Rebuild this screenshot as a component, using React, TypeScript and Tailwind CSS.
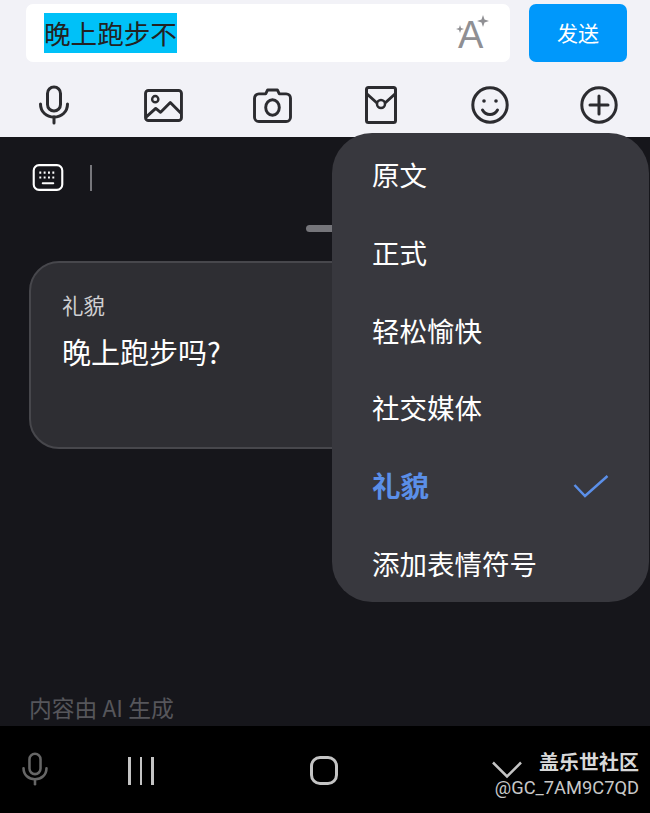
const cjk = "font-['Noto_Sans_CJK_SC','Noto_Sans',sans-serif]";

const menuItems = ["原文", "正式", "轻松愉快", "社交媒体", "礼貌", "添加表情符号"];

const Mic = ({ className }: { className?: string }) => (
  <svg viewBox="0 0 32 40" fill="none" stroke="currentColor" strokeWidth="3" strokeLinecap="round" className={className}>
    <rect x="9.5" y="2" width="13" height="24" rx="6.5" />
    <path d="M2.5 19c0 8 6 13 13.5 13s13.500-5 13.500-13" />
    <path d="M16 32v6" />
  </svg>
);

const ToolIcons = () => (
  <div className="ml-[-0.5px] grid h-[44px] grid-cols-[repeat(6,109px)] items-center justify-items-center text-[#2c2c30]">
    <Mic className="h-[40px] w-[32px]" />
    <svg viewBox="0 0 40 34" fill="none" stroke="currentColor" strokeWidth="3" strokeLinejoin="round" className="h-[33px] w-[39px]">
      <rect x="1.500" y="1.500" width="37" height="31" rx="3" />
      <circle cx="11.500" cy="10.500" r="3.200" strokeWidth="2.500" />
      <path d="M2 29l10-9 5 4 10-10 11 11" />
    </svg>
    <svg viewBox="0 0 40 36" fill="none" stroke="currentColor" strokeWidth="3" strokeLinejoin="round" className="h-[35px] w-[39px]">
      <path d="M13 6l2-4h10l2 4h7a4.500 4.500 0 0 1 4.500 4.500V30a4.500 4.500 0 0 1-4.500 4.500H6A4.500 4.500 0 0 1 1.500 30V10.500A4.500 4.500 0 0 1 6 6z" />
      <ellipse cx="20" cy="20" rx="7" ry="8" />
    </svg>
    <svg viewBox="0 0 32 38" fill="none" stroke="currentColor" strokeWidth="3" strokeLinejoin="round" className="h-[38px] w-[32px]">
      <rect x="1.500" y="1.500" width="29" height="35" rx="2" />
      <path d="M2 8l10 9M30 8l-10 9" />
      <circle cx="16" cy="18" r="4" strokeWidth="2.500" />
    </svg>
    <svg viewBox="0 0 38 38" fill="none" stroke="currentColor" strokeWidth="3" strokeLinecap="round" className="h-[38px] w-[38px]">
      <circle cx="19" cy="19" r="17.200" />
      <circle cx="13" cy="15" r="1.800" fill="currentColor" stroke="none" />
      <circle cx="25" cy="15" r="1.800" fill="currentColor" stroke="none" />
      <path d="M11.500 24c2 3.500 4.500 4.500 7.500 4.500s5.500-1 7.500-4.500" />
    </svg>
    <svg viewBox="0 0 38 38" fill="none" stroke="currentColor" strokeWidth="3" strokeLinecap="round" className="h-[38px] w-[38px]">
      <circle cx="19" cy="19" r="17.200" />
      <path d="M19 10v18M10 19h18" />
    </svg>
  </div>
);

export default function App() {
  return (
    <div className={`relative flex h-[813px] w-[650px] flex-col overflow-hidden bg-black ${cjk}`}>
      <header className="h-[137px] bg-[#f2f2f7] pt-[4px]">
        <div className="flex gap-[19px] pl-[26px] pr-[23px]">
          <div className="flex h-[58px] flex-1 items-center justify-between rounded-[7px] bg-white pl-[18px] pr-[20px]">
            <span className="bg-[#00c1f8] text-[26.6px] leading-[40px] text-[#222]">晚上跑步不</span>
            <div className="relative h-[36px] w-[36px] text-[#8f8f93]">
              <span className="absolute bottom-[-2px] left-[4px] font-['Liberation_Sans'] text-[38px] leading-[36px]">A</span>
              <svg viewBox="0 0 36 36" fill="currentColor" className="absolute inset-0 h-full w-full">
                <path d="M6 10l1 3 3 1-3 1-1 3-1-3-3-1 3-1zM29 0l1.500 4.500 4.500 1.500-4.500 1.500L29 12l-1.500-4.500L23 6l4.500-1.500z" />
              </svg>
            </div>
          </div>
          <button className="h-[58px] w-[98px] rounded-[7px] bg-[#0098fb] text-[21px] text-white">发送</button>
        </div>
        <div className="mt-[21px]">
          <ToolIcons />
        </div>
      </header>

      <main className="flex h-[589px] flex-col bg-[#16161b]">
        <div className="flex items-center gap-[26px] pl-[32px] pt-[27px]">
          <svg viewBox="0 0 32 28" fill="none" className="h-[27px] w-[32px] text-white">
            <rect x="1.200" y="1.200" width="29.600" height="25.600" rx="5.500" stroke="currentColor" strokeWidth="2.200" />
            <path d="M7 9h2M11.500 9h2M16 9h2M20.500 9h2M25 9h0M7 14h2M11.500 14h2M16 14h2M20.500 14h2" stroke="currentColor" strokeWidth="2.200" />
            <path d="M10.500 20h11" stroke="currentColor" strokeWidth="2" strokeLinecap="round" />
          </svg>
          <div className="h-[26px] w-[1.500px] bg-[#77777c]" />
        </div>
        <div className="ml-[306px] mt-[34px] h-[7px] w-[60px] rounded-full bg-[#75757a]" />
        <section className="ml-[29px] mt-[29px] h-[188px] w-[400px] rounded-[30px] border-2 border-[#47474c] bg-[#2e2e33] pl-[31px] pt-[27px]">
          <p className="text-[21.5px] leading-[30px] text-[#cfcfd2]">礼貌</p>
          <p className="mt-[11px] text-[29px] leading-[40px] text-white">晚上跑步吗?</p>
        </section>
        <p className="mt-auto pb-[2px] text-[22.800px] leading-[32px] text-[#56565b]">
          <span className="pl-[29px]">内容由 AI 生成</span>
        </p>
      </main>

      <footer className="relative flex h-[87px] items-center text-[#c4c4c4]">
        <Mic className="ml-[21px] mt-[-1px] h-[34px] w-[28px] text-[#666]" />
        <div className="ml-[79px] mt-[2px] flex h-[28px] gap-[9px]">
          <div className="w-[2.500px] bg-[#c4c4c4]" />
          <div className="w-[2.500px] bg-[#c4c4c4]" />
          <div className="w-[2.500px] bg-[#c4c4c4]" />
        </div>
        <div className="ml-[156px] mt-[2px] h-[29px] w-[28px] rounded-[10px] border-[3px] border-[#c4c4c4]" />
        <svg viewBox="0 0 30 18" fill="none" stroke="currentColor" strokeWidth="2.500" className="ml-[154px] mt-[1px] h-[18px] w-[30px]">
          <path d="M1 1.500l14 14 14-14" />
        </svg>
        {/* watermark sits over the bar */}
        <div className="absolute right-[11px] top-[23px] text-right">
          <p className="text-[20px] font-bold leading-[26px] text-[#d8d8d8]">盖乐世社区</p>
          <p className="mt-[1px] font-['Roboto'] text-[18.300px] leading-[24px] text-[#c8c8c8]">@GC_7AM9C7QD</p>
        </div>
      </footer>

      {/* dropdown lies over the card */}
      <div className="absolute left-[332px] top-[133px] flex h-[469px] w-[317px] flex-col rounded-[40px] bg-[#38383e] pl-[40px] pt-[3px]">
        {menuItems.map((item) => {
          const active = item === "礼貌";
          return (
            <div
              key={item}
              className={`flex h-[78px] items-center justify-between pr-[40px] ${
                active ? "text-[28.500px] font-bold text-[#5b8fe8]" : "text-[27.500px] text-white"
              }`}
            >
              <span>{item}</span>
              {active && (
                <svg viewBox="0 0 36 24" fill="none" stroke="currentColor" strokeWidth="2.500" className="h-[24px] w-[36px]">
                  <path d="M1.500 11l10.500 11L34.500 2" />
                </svg>
              )}
            </div>
          );
        })}
      </div>
    </div>
  );
}
